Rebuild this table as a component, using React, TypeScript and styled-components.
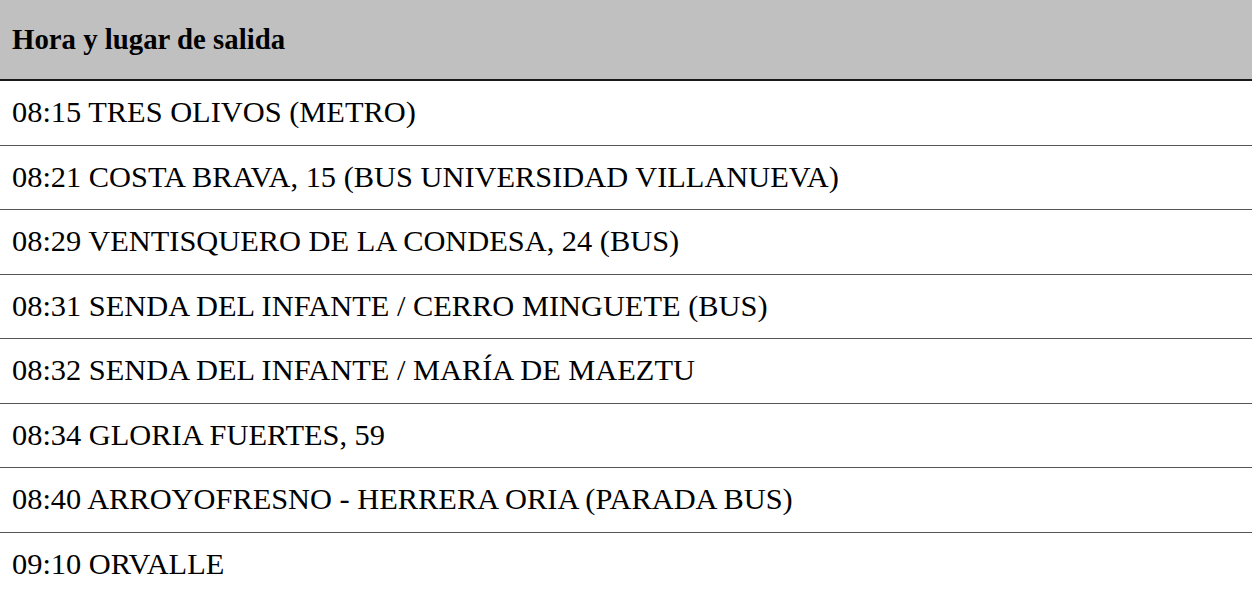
import styled, { createGlobalStyle } from 'styled-components';

const GlobalStyle = createGlobalStyle`
    html, body {
        margin: 0;
        padding: 0;
        background: #ffffff;
    }
    body {
        font-family: "Liberation Serif", "Times New Roman", serif;
        color: #000000;
    }
`;

const Schedule = styled.div`
    display: flex;
    flex-direction: column;
    width: 100%;
`;

const HeaderCell = styled.div`
    display: flex;
    align-items: center;
    height: 79px;
    padding: 0 12px;
    background: #c0c0c0;
    border-bottom: 2px solid #1a1a1a;
    font-size: 28.8px;
    font-weight: bold;
`;

const StopRow = styled.div<{ $last?: boolean }>`
    display: flex;
    align-items: center;
    height: 63.5px;
    padding: 0 12px;
    border-bottom: ${p => (p.$last ? 'none' : '1px solid #555555')};
    font-size: 30.4px;
    white-space: nowrap;
`;

const stops = [
    '08:15 TRES OLIVOS (METRO)',
    '08:21 COSTA BRAVA, 15 (BUS UNIVERSIDAD VILLANUEVA)',
    '08:29 VENTISQUERO DE LA CONDESA, 24 (BUS)',
    '08:31 SENDA DEL INFANTE / CERRO MINGUETE (BUS)',
    '08:32 SENDA DEL INFANTE / MARÍA DE MAEZTU',
    '08:34 GLORIA FUERTES, 59',
    '08:40 ARROYOFRESNO - HERRERA ORIA (PARADA BUS)',
    '09:10 ORVALLE',
];

const App = () => {
    return (
        <>
            <GlobalStyle />
            <Schedule>
                <HeaderCell>Hora y lugar de salida</HeaderCell>
                {stops.map((s, i) => (
                    <StopRow key={s} $last={i === stops.length - 1}>{s}</StopRow>
                ))}
            </Schedule>
        </>
    );
};

export default App;
